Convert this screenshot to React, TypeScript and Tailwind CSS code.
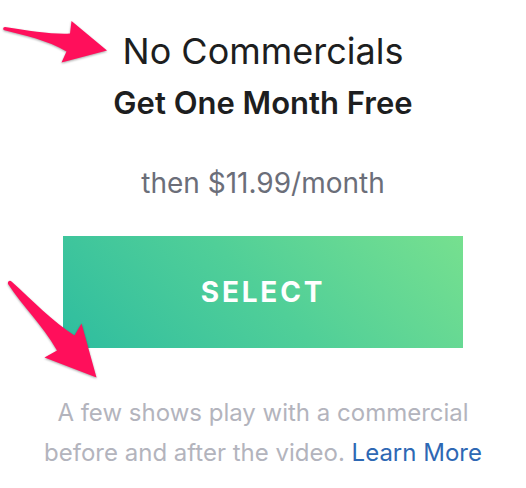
function TopArrow() {
  return (
    <svg
      aria-hidden="true"
      className="pointer-events-none absolute top-4 left-0 h-14 w-28 drop-shadow-[0_1px_1px_rgba(0,0,0,0.35)]"
      viewBox="0 16 112 56"
      fill="#ff0f5b"
    >
      <path d="M5 27C3 27.200 2.500 29.600 4.500 30.200C25 35.500 47 40 66.500 51.500L61.500 62.500L107 50.500L71.500 21L70 33.500C54 34.500 30 31 5 27Z" />
    </svg>
  );
}

function BottomArrow() {
  return (
    <svg
      aria-hidden="true"
      className="pointer-events-none absolute -bottom-8 left-0 h-28 w-28 drop-shadow-[0_1px_1px_rgba(0,0,0,0.35)]"
      viewBox="0 268 112 112"
      fill="#ff0f5b"
    >
      <path d="M11.500 281.500C9.500 279.700 7 282 8.200 284.200C23 307 42 324 57 350.500L44.500 357.500L96.500 377.500L81.500 323.500L74.500 335.500C53 322 33 301 11.500 281.500Z" />
    </svg>
  );
}

export default function App() {
  return (
    <main className="relative min-h-screen overflow-hidden bg-white pt-[31px] pb-4 text-center font-['Inter','Liberation_Sans',sans-serif]">
      <TopArrow />
      <h1 className="text-4xl leading-10 font-normal text-[#1d1e20]">No Commercials</h1>
      <h2 className="mt-3 text-[31px] leading-10 font-semibold text-[#1d1e20]">
        Get One Month Free
      </h2>
      <p className="mt-10 text-[28px] leading-10 font-normal text-[#6b6e79]">
        then $11.99/month
      </p>
      <div className="relative mt-[33px] px-[63px]">
        <button
          type="button"
          className="block h-28 w-full cursor-pointer bg-linear-45 from-[#2dbd9f] via-[#50cf98] to-[#76e08f] text-[28px] font-bold tracking-widest text-white"
        >
          SELECT
        </button>
        <BottomArrow />
      </div>
      <p className="mt-[45px] px-8 text-2xl leading-10 font-normal text-[#b3b4bd]">
        <span>A few shows play with a commercial before and after the video.</span>{" "}
        <a href="#learn-more" className="inline-block text-[#2e68b4]">
          Learn More
        </a>
      </p>
    </main>
  );
}
